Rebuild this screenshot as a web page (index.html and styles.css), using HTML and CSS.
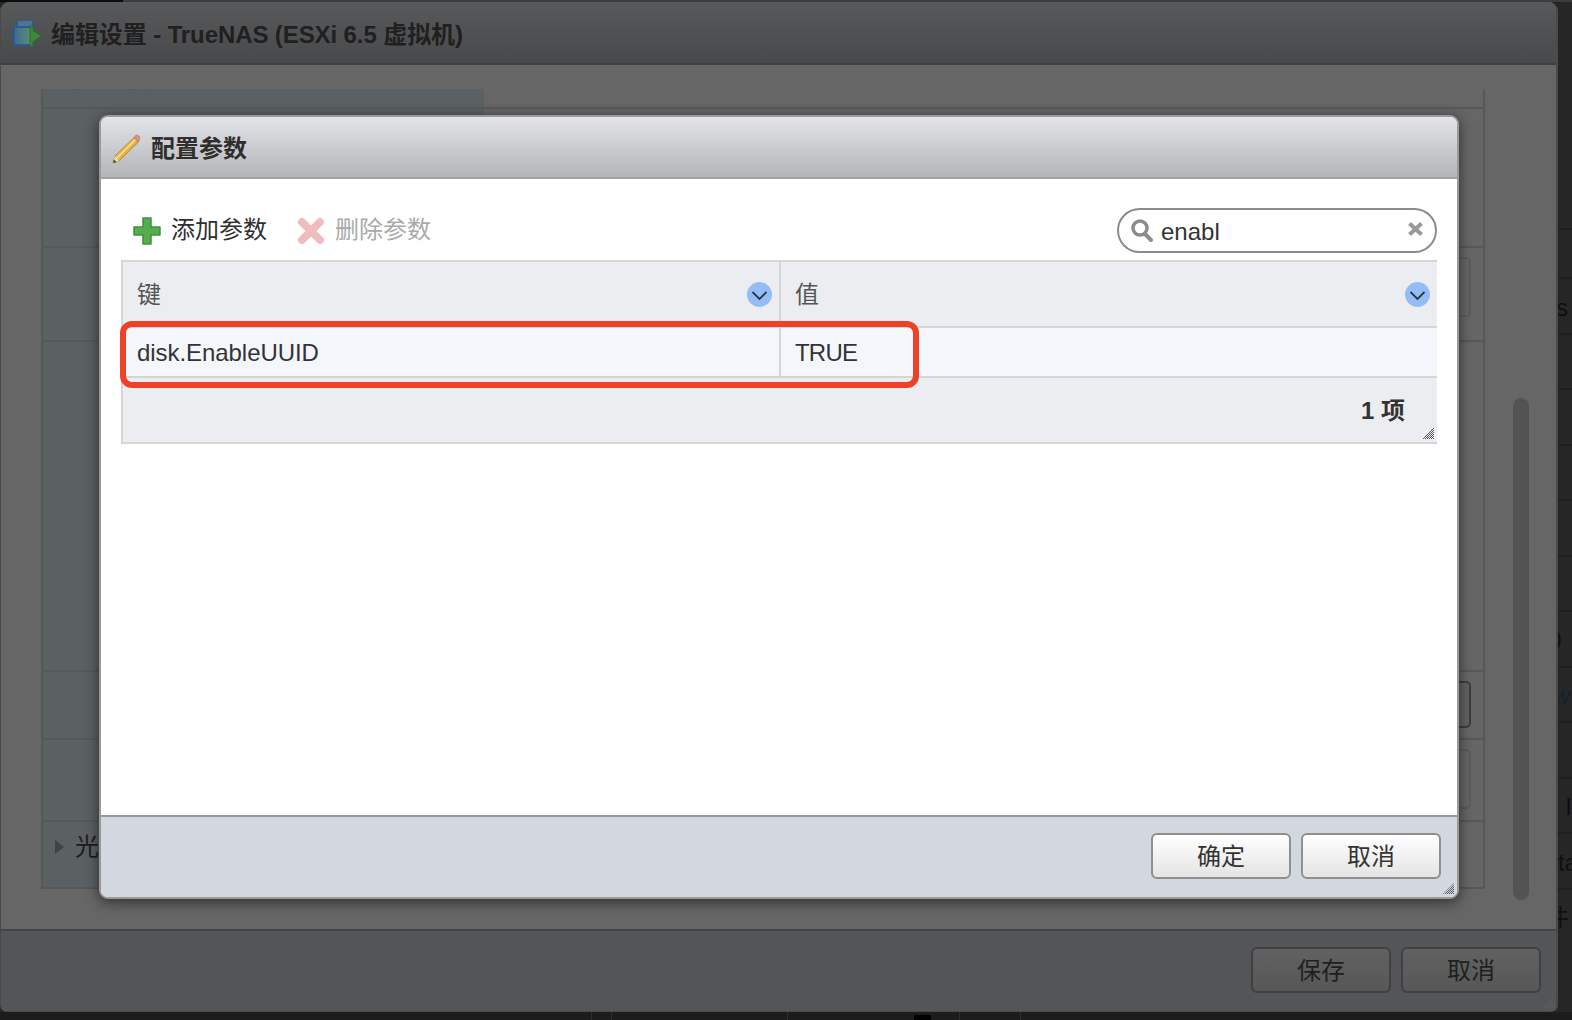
FILE: index.html
```html
<!DOCTYPE html>
<html lang="zh-CN">
<head>
<meta charset="utf-8">
<title>编辑设置 - TrueNAS</title>
<link rel="stylesheet" href="styles.css">
</head>
<body>
<svg class="defs" width="0" height="0" aria-hidden="true">
  <defs>
    <pattern id="checker" width="2" height="2" patternUnits="userSpaceOnUse">
      <rect width="1" height="1" fill="#5c5c5c"/>
      <rect x="1" y="1" width="1" height="1" fill="#5c5c5c"/>
    </pattern>
    <linearGradient id="pencil" x1="0" y1="0" x2="1" y2="1">
      <stop offset="0" stop-color="#f2cf62"/>
      <stop offset="1" stop-color="#d79a2b"/>
    </linearGradient>
    <linearGradient id="stack" x1="0" y1="0" x2="1" y2="0">
      <stop offset="0" stop-color="#3d6a92"/>
      <stop offset="1" stop-color="#5f9270"/>
    </linearGradient>
  </defs>
</svg>

<div class="backdrop">
  <div class="topline"><span class="topline-dark"></span></div>
  <div class="back-rows">
    <div class="back-row back-row-short"></div>
    <div class="back-row"><span class="frag">Tools</span></div>
    <div class="back-row"></div>
    <div class="back-row"></div>
    <div class="back-row"></div>
    <div class="back-row"></div>
    <div class="back-row"></div>
    <div class="back-row"><span class="frag frag-paren">(64 位)</span></div>
    <div class="back-row"><span class="frag frag-link">view</span></div>
    <div class="back-row"></div>
    <div class="back-row"><span class="frag frag-edge">Admin I</span></div>
    <div class="back-row"><span class="frag frag-over">data</span></div>
    <div class="back-row"><span class="frag frag-cjk">文件</span></div>
  </div>
  <div class="taskbar">
    <span class="tick tick-a"></span>
    <span class="tick tick-b"></span>
    <span class="tick tick-c"></span>
    <span class="tick-box"></span>
    <span class="tick tick-d"></span>
    <span class="tick tick-e"></span>
  </div>
</div>

<section class="window">
  <header class="window-head">
    <svg class="app-icon" viewBox="0 0 28 27" width="28" height="27">
      <rect x="4.500" y="0.500" width="15" height="17" fill="#4c7590" stroke="#2f5d8a"/>
      <rect x="1" y="7" width="19" height="18" fill="url(#stack)" stroke="#2a5a96" stroke-width="2"/>
      <path d="M17 6h3v4.500L28 16l-8 6v4h-3z" fill="#3c8a38" stroke="#2d6b2c"/>
    </svg>
    <h1 class="window-title">编辑设置 - TrueNAS (ESXi 6.5 虚拟机)</h1>
  </header>

  <div class="window-body">
    <div class="props">
      <div class="prop-row"><div class="prop-label prop-label-clip"><span class="clip-text">配置项</span></div></div>
      <div class="prop-row"><div class="prop-label"></div></div>
      <div class="prop-row"><div class="prop-label"></div><div class="prop-value"><span class="field"></span></div></div>
      <div class="prop-row"><div class="prop-label"></div></div>
      <div class="prop-row"><div class="prop-label"></div><div class="prop-value"><span class="field field-short field-strong"></span></div></div>
      <div class="prop-row"><div class="prop-label"></div><div class="prop-value"><span class="field"></span></div></div>
      <div class="prop-row prop-row-last"><div class="prop-label"><i class="caret"></i><span class="label-text">光驱 1</span></div></div>
    </div>
    <div class="scrollbar"></div>
  </div>

  <footer class="window-foot">
    <button class="btn btn-dim" type="button">保存</button>
    <button class="btn btn-dim" type="button">取消</button>
    <svg class="grip" viewBox="0 0 11 11" width="11" height="11"><path d="M11 0v11H0z" fill="url(#checker)"/></svg>
  </footer>
</section>

<section class="dialog">
  <header class="dialog-head">
    <svg class="pencil-icon" viewBox="0 0 28 30" width="28" height="30">
      <path d="M1 29l2-7L22 3.500l4.500 4.500L7 27z" fill="url(#pencil)" stroke="#a8802f" stroke-width="0.800"/>
      <path d="M5 24L23.500 5.500" stroke="#f8e7a6" stroke-width="1.200"/>
      <path d="M1 29l2-7 4 5z" fill="#eadbb8"/>
      <path d="M1 29l1-3.500 2.500 2.500z" fill="#3d3d3d"/>
      <path d="M22 3.500l1.500-2q1.500-1 3 0l1 1q1 1.500 0 3L26.500 8z" fill="#d98f8f" stroke="#b67272" stroke-width="0.600"/>
    </svg>
    <h2 class="dialog-title">配置参数</h2>
  </header>

  <div class="dialog-body">
    <div class="toolbar">
      <button class="tool" type="button">
        <svg viewBox="0 0 28 28" width="28" height="28"><path d="M10 1h8v9h9v8h-9v9h-8v-9H1v-8h9z" fill="#55ad4d" stroke="#3f913d" stroke-linejoin="round" stroke-width="1.500"/></svg>
        <span class="tool-text">添加参数</span>
      </button>
      <button class="tool tool-off" type="button">
        <svg viewBox="0 0 28 28" width="28" height="28"><path d="M5 5l18 18M23 5L5 23" stroke="#efbdbd" stroke-width="8" stroke-linecap="round"/></svg>
        <span class="tool-text">删除参数</span>
      </button>
      <div class="search">
        <svg class="search-icon" viewBox="0 0 22 23" width="22" height="23"><circle cx="9" cy="9" r="7" fill="#fff" stroke="#8c8c8c" stroke-width="3.500"/><path d="M14 15l6 6" stroke="#8c8c8c" stroke-width="4" stroke-linecap="round"/></svg>
        <span class="search-text">enabl</span>
        <svg class="search-clear" viewBox="0 0 17 16" width="17" height="16"><path d="M2.500 2.500l12 11M14.500 2.500l-12 11" stroke="#999" stroke-width="4"/></svg>
      </div>
    </div>

    <div class="grid">
      <div class="cell cell-head cell-key">
        <span class="head-text">键</span>
        <svg class="sort" viewBox="0 0 25 25" width="25" height="25"><circle cx="12.500" cy="12.500" r="12.500" fill="#95bdf5"/><path d="M5.500 10l7 7 7-7" fill="none" stroke="#2f3540" stroke-width="1.800"/></svg>
      </div>
      <div class="cell cell-head cell-val">
        <span class="head-text">值</span>
        <svg class="sort" viewBox="0 0 25 25" width="25" height="25"><circle cx="12.500" cy="12.500" r="12.500" fill="#95bdf5"/><path d="M5.500 10l7 7 7-7" fill="none" stroke="#2f3540" stroke-width="1.800"/></svg>
      </div>
      <div class="cell cell-body cell-key">disk.EnableUUID</div>
      <div class="cell cell-body cell-val cell-true">TRUE</div>
      <div class="grid-foot">
        <strong class="count">1 项</strong>
        <svg class="grip grip-table" viewBox="0 0 12 12" width="12" height="12"><path d="M12 0v12H0z" fill="url(#checker)"/></svg>
      </div>
    </div>
  </div>

  <footer class="dialog-foot">
    <button class="btn" type="button">确定</button>
    <button class="btn" type="button">取消</button>
    <svg class="grip" viewBox="0 0 11 11" width="11" height="11"><path d="M11 0v11H0z" fill="url(#checker)"/></svg>
  </footer>
</section>

<div class="callout"></div>
</body>
</html>
```

FILE: styles.css
```css
* { box-sizing: border-box; }

html, body {
  margin: 0;
  height: 100%;
  overflow: hidden;
}

body {
  background: #262626;
  color: #333;
  font-family: "Liberation Sans", "Noto Sans CJK SC", sans-serif;
  font-size: 24px;
  line-height: 28px;
}

.defs { position: absolute; }

/* Page behind the modal window */
.backdrop {
  height: 1020px;
  display: flex;
  flex-direction: column;
}

.topline {
  height: 2px;
  background: #3c3c3c;
}

.topline-dark {
  display: block;
  width: 123px;
  height: 2px;
  background: #0c0c0c;
}

.back-rows {
  flex: 1;
  padding-top: 226px;
  overflow: hidden;
}

.back-row {
  height: 55.500px;
  border-top: 2px solid #1f1f1f;
  display: flex;
  justify-content: flex-end;
  align-items: center;
  padding-top: 4px;
}

.back-row-short { height: 49px; }

.frag {
  color: #0f0f0f;
  padding-right: 4px;
  white-space: nowrap;
}

.frag-paren { padding-right: 10px; margin-bottom: 6px; }
.frag-link { color: #16202e; font-style: italic; padding-right: 2px; }
.frag-edge { padding-right: 0; }
.frag-over { padding-right: 0; margin-right: -6px; flex: none; }
.frag-cjk { padding-right: 3px; }

.taskbar {
  height: 8px;
  background: #1c1c1c;
  display: flex;
  align-items: flex-end;
  flex: none;
}

.tick {
  width: 1px;
  height: 8px;
  background: #2d2d2d;
}

.tick-a { margin-left: 591px; }
.tick-b { margin-left: 19px; }
.tick-c { margin-left: 175px; }
.tick-d { margin-left: 28px; }
.tick-e { margin-left: 60px; }

.tick-box {
  width: 17px;
  height: 5px;
  margin-left: 126px;
  background: #050505;
  border: 2px solid #000;
}

/* Modal window */
.window {
  position: absolute;
  left: 0;
  top: 2px;
  width: 1558px;
  height: 1010px;
  display: flex;
  flex-direction: column;
  background: #666;
  border-style: solid;
  border-color: #4a4a4a;
  border-width: 0 2px 1px 1px;
  border-radius: 9px 9px 7px 7px;
  overflow: hidden;
}

.window-head {
  height: 63px;
  flex: none;
  display: flex;
  align-items: center;
  gap: 10px;
  padding: 0 0 0 12px;
  background: linear-gradient(#58595b, #48494b);
  border-bottom: 2px solid #404040;
}

.app-icon { margin-top: 2px; }

.window-title {
  margin: 4px 0 0;
  font-size: 24px;
  line-height: 28px;
  font-weight: 700;
  letter-spacing: -0.100px;
  color: #202020;
  white-space: nowrap;
}

.window-body {
  flex: 1;
  display: flex;
  align-items: flex-start;
  min-height: 0;
}

.props {
  width: 1444px;
  height: 800px;
  margin: 24px 0 0 40px;
  border-style: solid;
  border-color: #585858;
  border-width: 0 2px 2px 2px;
  display: grid;
  grid-template-rows: 20px 139px 94px 330px 68px 82px 1fr;
}

.prop-row {
  display: flex;
  border-bottom: 2px solid #585858;
  min-height: 0;
}

.prop-row-last { border-bottom: 0; }

.prop-label {
  width: 441px;
  background: #5b6063;
  display: flex;
  align-items: flex-start;
  padding: 11px 0 0 12px;
}

.prop-label-clip {
  padding: 0 0 0 33px;
  overflow: hidden;
  color: #222;
}

.clip-text {
  margin-top: -24px;
  line-height: 28px;
}

.caret {
  width: 0;
  height: 0;
  margin: 7px 11px 0 0;
  border-style: solid;
  border-width: 7px 0 7px 9px;
  border-color: transparent transparent transparent #404244;
}

.label-text { color: #1d1d1d; }

.prop-value {
  flex: 1;
  display: flex;
  justify-content: flex-end;
  padding: 9px 12px 0 0;
}

.field {
  width: 400px;
  height: 60px;
  border: 2px solid #5c5c5c;
  border-radius: 5px;
}

.field-short { height: 47px; }
.field-strong { border-color: #3d3d3d; background: #626262; }

.scrollbar {
  width: 16px;
  height: 502px;
  margin: 333px 0 0 28px;
  border-radius: 8px;
  background: #535353;
}

.window-foot {
  height: 82px;
  flex: none;
  position: relative;
  display: flex;
  justify-content: flex-end;
  gap: 10px;
  padding: 16px 15px 0 0;
  background: #545558;
  border-top: 2px solid #444;
}

/* Buttons and grips */
.btn {
  width: 140px;
  height: 46px;
  padding: 2px 0 0;
  border: 2px solid #8f8f8f;
  border-radius: 6px;
  background: linear-gradient(#fff, #e4e4e4);
  color: #333;
  font: inherit;
}

.btn-dim {
  border-color: #3f4042;
  background: linear-gradient(#616161, #575757);
  color: #1f1f1f;
}

.grip {
  position: absolute;
  right: 3px;
  bottom: 3px;
}

/* Configuration dialog */
.dialog {
  position: absolute;
  left: 99px;
  top: 115px;
  width: 1360px;
  height: 784px;
  display: flex;
  flex-direction: column;
  background: #fff;
  border: 2px solid #9a9a9a;
  border-radius: 9px;
  box-shadow: 0 3px 14px rgba(0, 0, 0, 0.55);
  overflow: hidden;
}

.dialog-head {
  height: 62px;
  flex: none;
  display: flex;
  align-items: center;
  gap: 10px;
  padding-left: 12px;
  background: linear-gradient(#e3e4e7, #b4b5b8);
  border-bottom: 2px solid #a3a3a3;
}

.pencil-icon { margin-top: 3px; margin-left: -1px; }

.dialog-title {
  margin: 4px 0 0 1px;
  font-size: 24px;
  line-height: 28px;
  font-weight: 700;
  color: #2e2e2e;
}

.dialog-body {
  flex: 1;
  padding: 29px 20px 0 20px;
  min-height: 0;
}

.toolbar {
  height: 45px;
  display: flex;
  align-items: center;
  margin-bottom: 7px;
}

.tool {
  display: flex;
  align-items: center;
  gap: 10px;
  padding: 0;
  margin-left: 12px;
  border: 0;
  background: none;
  color: #2f2f2f;
  font: inherit;
}

.tool-text { margin-bottom: 2px; }

.tool-off {
  margin-left: 30px;
  color: #a9a9a9;
}

.search {
  margin-left: auto;
  width: 320px;
  height: 45px;
  display: flex;
  align-items: center;
  padding: 0 11px 0 12px;
  border: 2px solid #8c8c8c;
  border-radius: 23px;
  background: #fff;
}

.search-text {
  margin: 2px 0 0 8px;
  color: #333;
}

.search-clear {
  margin-left: auto;
  margin-bottom: 4px;
}

.grid {
  display: grid;
  grid-template-columns: 658px 1fr;
  border-top: 2px solid #d6d6d6;
  border-left: 2px solid #d6d6d6;
  border-bottom: 2px solid #d6d6d6;
  background: #ecedf1;
}

.cell {
  display: flex;
  align-items: center;
  justify-content: space-between;
  border-bottom: 2px solid #d6d6d6;
}

.cell-key {
  padding: 0 7px 0 14px;
  border-right: 2px solid #d6d6d6;
}

.cell-val { padding: 0 7px 0 14px; }

.cell-head {
  height: 66px;
  color: #555;
}

.head-text { margin-top: 2px; }

.cell-body {
  height: 50px;
  padding-top: 2px;
  background: #f3f6fb;
  color: #333;
  letter-spacing: -0.060px;
}

.cell-true { letter-spacing: -0.800px; }

.grid-foot {
  grid-column: 1 / -1;
  height: 64px;
  position: relative;
  display: flex;
  justify-content: flex-end;
  padding: 19px 32px 0 0;
}

.count {
  font-weight: 700;
  color: #333;
}

.dialog-foot {
  height: 82px;
  flex: none;
  position: relative;
  display: flex;
  justify-content: flex-end;
  gap: 10px;
  padding: 16px 16px 0 0;
  background: #d3d7df;
  border-top: 2px solid #999;
}

/* Red annotation drawn on top of the screenshot */
.callout {
  position: absolute;
  left: 120px;
  top: 321px;
  width: 799px;
  height: 67px;
  border: 6px solid #ee4128;
  border-radius: 12px;
}
```
